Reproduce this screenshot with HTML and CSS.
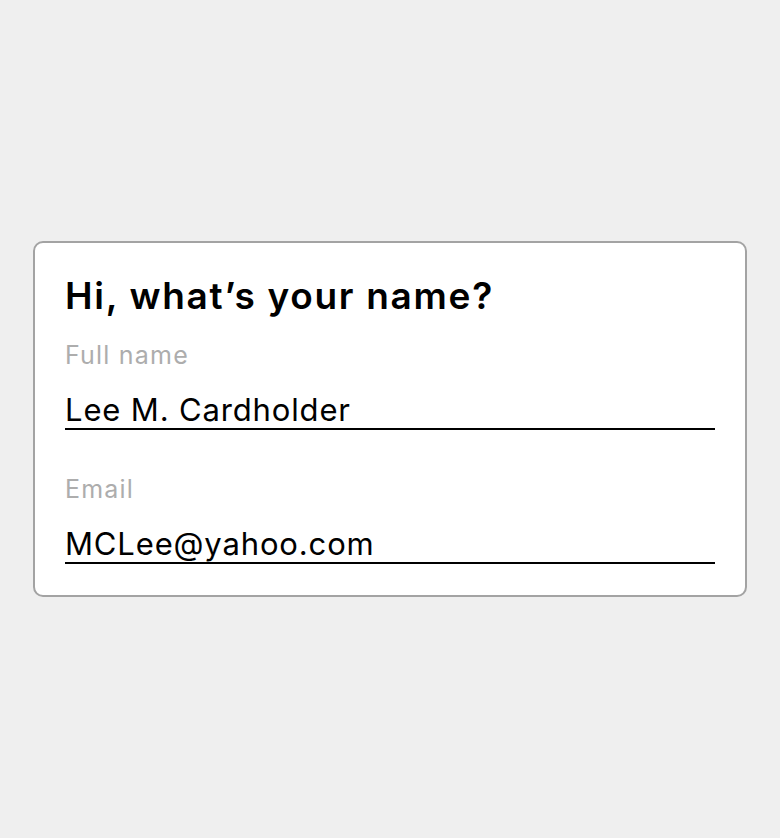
FILE: index.html
```html
<!DOCTYPE html>
<html lang="en">
<head>
<meta charset="utf-8">
<title>Name form</title>
<link rel="stylesheet" href="styles.css">
</head>
<body>
<main class="page">
  <section class="card">
    <h1 class="title">Hi, what’s your name?</h1>
    <div class="field">
      <div class="label">Full name</div>
      <div class="value">Lee M. Cardholder</div>
    </div>
    <div class="field">
      <div class="label">Email</div>
      <div class="value">MCLee@yahoo.com</div>
    </div>
  </section>
</main>
</body>
</html>
```
FILE: styles.css
```css
html, body {
  margin: 0;
  padding: 0;
}
body {
  background: #efefef;
  font-family: Inter, "Noto Sans", sans-serif;
  color: #000;
}
.page {
  height: 838px;
  display: flex;
  align-items: center;
  padding: 0 33px;
  box-sizing: border-box;
}
.card {
  flex: 1;
  background: #fff;
  border: 2px solid #a3a3a3;
  border-radius: 10px;
  padding: 31px 30px 31px 30px;
  display: flex;
  flex-direction: column;
  gap: 44px;
}
.title {
  margin: 0;
  font-size: 37px;
  line-height: 44px;
  font-weight: 600;
  letter-spacing: 1.7px;
  margin-bottom: -22px;
}
.field {
  display: flex;
  flex-direction: column;
  gap: 22px;
}
.label {
  font-size: 25px;
  line-height: 30px;
  letter-spacing: 1.2px;
  color: #adadad;
}
.value {
  font-size: 31px;
  line-height: 36px;
  letter-spacing: 0.85px;
  border-bottom: 2px solid #000;
}
```
